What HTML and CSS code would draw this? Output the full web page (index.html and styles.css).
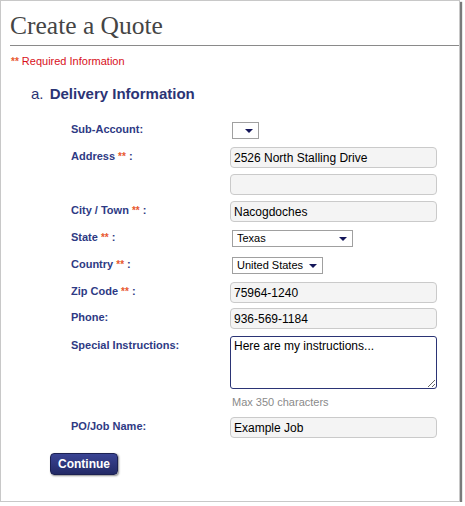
FILE: index.html
```html
<!DOCTYPE html>
<html lang="en">

<head>
  <meta charset="UTF-8" />
  <meta name="viewport" content="width=device-width,initial-scale=1" />
  <title>Create a Quote</title>
  <link rel="stylesheet" href="styles.css">
</head>

<body>
  <div class="window">
    <h1 class="page-title">Create a Quote</h1>
    <p class="required-note"><span class="req">**</span> Required Information</p>

    <h2 class="section-title"><span class="step">a.</span> Delivery Information</h2>

    <form class="quote-form">
      <div class="row">
        <label for="subAccount">Sub-Account:</label>
        <span class="select select-tiny"><select id="subAccount"><option></option></select></span>
      </div>
      <div class="row">
        <label for="address1">Address <span class="req">**</span> :</label>
        <input id="address1" type="text" value="2526 North Stalling Drive" />
      </div>
      <div class="row">
        <span></span>
        <input id="address2" type="text" value="" />
      </div>
      <div class="row">
        <label for="city">City / Town <span class="req">**</span> :</label>
        <input id="city" type="text" value="Nacogdoches" />
      </div>
      <div class="row">
        <label for="state">State <span class="req">**</span> :</label>
        <span class="select select-state"><select id="state"><option>Texas</option></select></span>
      </div>
      <div class="row">
        <label for="country">Country <span class="req">**</span> :</label>
        <span class="select select-country"><select id="country"><option>United States</option></select></span>
      </div>
      <div class="row row-tight">
        <label for="zip">Zip Code <span class="req">**</span> :</label>
        <input id="zip" type="text" value="75964-1240" />
      </div>
      <div class="row row-loose">
        <label for="phone">Phone:</label>
        <input id="phone" type="text" value="936-569-1184" />
      </div>
      <div class="row">
        <label for="instructions">Special Instructions:</label>
        <textarea id="instructions">Here are my instructions...</textarea>
      </div>
      <p class="hint">Max 350 characters</p>
      <div class="row">
        <label for="poName">PO/Job Name:</label>
        <input id="poName" type="text" value="Example Job" />
      </div>
      <div class="actions">
        <button class="btn" type="button">Continue</button>
      </div>
    </form>
  </div>
</body>

</html>
```

FILE: styles.css
```css
* {
  box-sizing: border-box;
  margin: 0;
  padding: 0;
}

body {
  font-family: "Liberation Sans", Arial, sans-serif;
  background: #fff;
}

.window {
  width: 460px;
  height: 502px;
  background: #fff;
  border: 1px solid #c8c8c8;
  box-shadow: 2px 2px 1px #7a7a7a;
}

.page-title {
  margin-left: 9px;
  padding: 10px 0 4px;
  font-family: "Liberation Serif", "Times New Roman", serif;
  font-size: 25.5px;
  font-weight: normal;
  line-height: 30px;
  color: #454545;
  border-bottom: 1px solid #8a8a8a;
}

.required-note {
  margin-top: 8px;
  padding-left: 10px;
  font-size: 11px;
  line-height: 14px;
  color: #d8101a;
}

.req {
  color: #e8582e;
  font-weight: bold;
  font-size: 10px;
}

.section-title {
  margin-top: 16px;
  padding-left: 30px;
  font-size: 15px;
  line-height: 18px;
  color: #2b3475;
}

.section-title .step {
  font-weight: normal;
  margin-right: 2px;
}

.quote-form {
  margin-top: 17px;
}

.row {
  display: grid;
  grid-template-columns: 159px 207px;
  align-items: start;
  padding-left: 70px;
  margin-bottom: 6px;
}

.row-tight {
  margin-bottom: 5px;
}

.row-loose {
  margin-bottom: 7px;
}

.row label {
  font-size: 11px;
  font-weight: bold;
  line-height: 19px;
  color: #2e3a84;
}

.row input {
  height: 21px;
  padding: 0 3px;
  border: 1px solid #cacaca;
  border-radius: 4px;
  background: #f4f4f4;
  font-family: inherit;
  font-size: 12px;
  color: #000;
}

.select {
  position: relative;
  margin: 2px 0 2px 2px;
  height: 17px;
  border: 1px solid #a0a0a0;
  background: #fff;
}

.select select {
  appearance: none;
  -webkit-appearance: none;
  display: block;
  width: 100%;
  height: 15px;
  border: none;
  background: transparent;
  padding: 0 16px 0 4px;
  font-family: inherit;
  font-size: 11px;
  line-height: 15px;
  color: #000;
  outline: none;
}

.select::after {
  content: "";
  position: absolute;
  right: 5px;
  top: 6px;
  border-left: 4px solid transparent;
  border-right: 4px solid transparent;
  border-top: 4px solid #14165a;
  pointer-events: none;
}

.select-tiny {
  width: 27px;
}

.select-state {
  width: 121px;
}

.select-country {
  width: 91px;
}

.row textarea {
  height: 53px;
  padding: 2px 3px;
  border: 1px solid #2b3475;
  border-radius: 3px;
  font-family: inherit;
  font-size: 12px;
  color: #000;
  resize: both;
}

.hint {
  padding-left: 231px;
  margin-bottom: 8px;
  font-size: 11px;
  line-height: 14px;
  color: #8a8a8a;
}

.actions {
  padding-left: 49px;
  margin-top: 15px;
}

.btn {
  width: 68px;
  height: 22px;
  background: linear-gradient(#3a4494, #232a66);
  border: 1px solid #1c2152;
  border-radius: 4px;
  box-shadow: 1px 1px 2px rgba(0, 0, 0, 0.45);
  color: #fff;
  font-family: inherit;
  font-size: 12px;
  font-weight: bold;
  cursor: pointer;
}
```
